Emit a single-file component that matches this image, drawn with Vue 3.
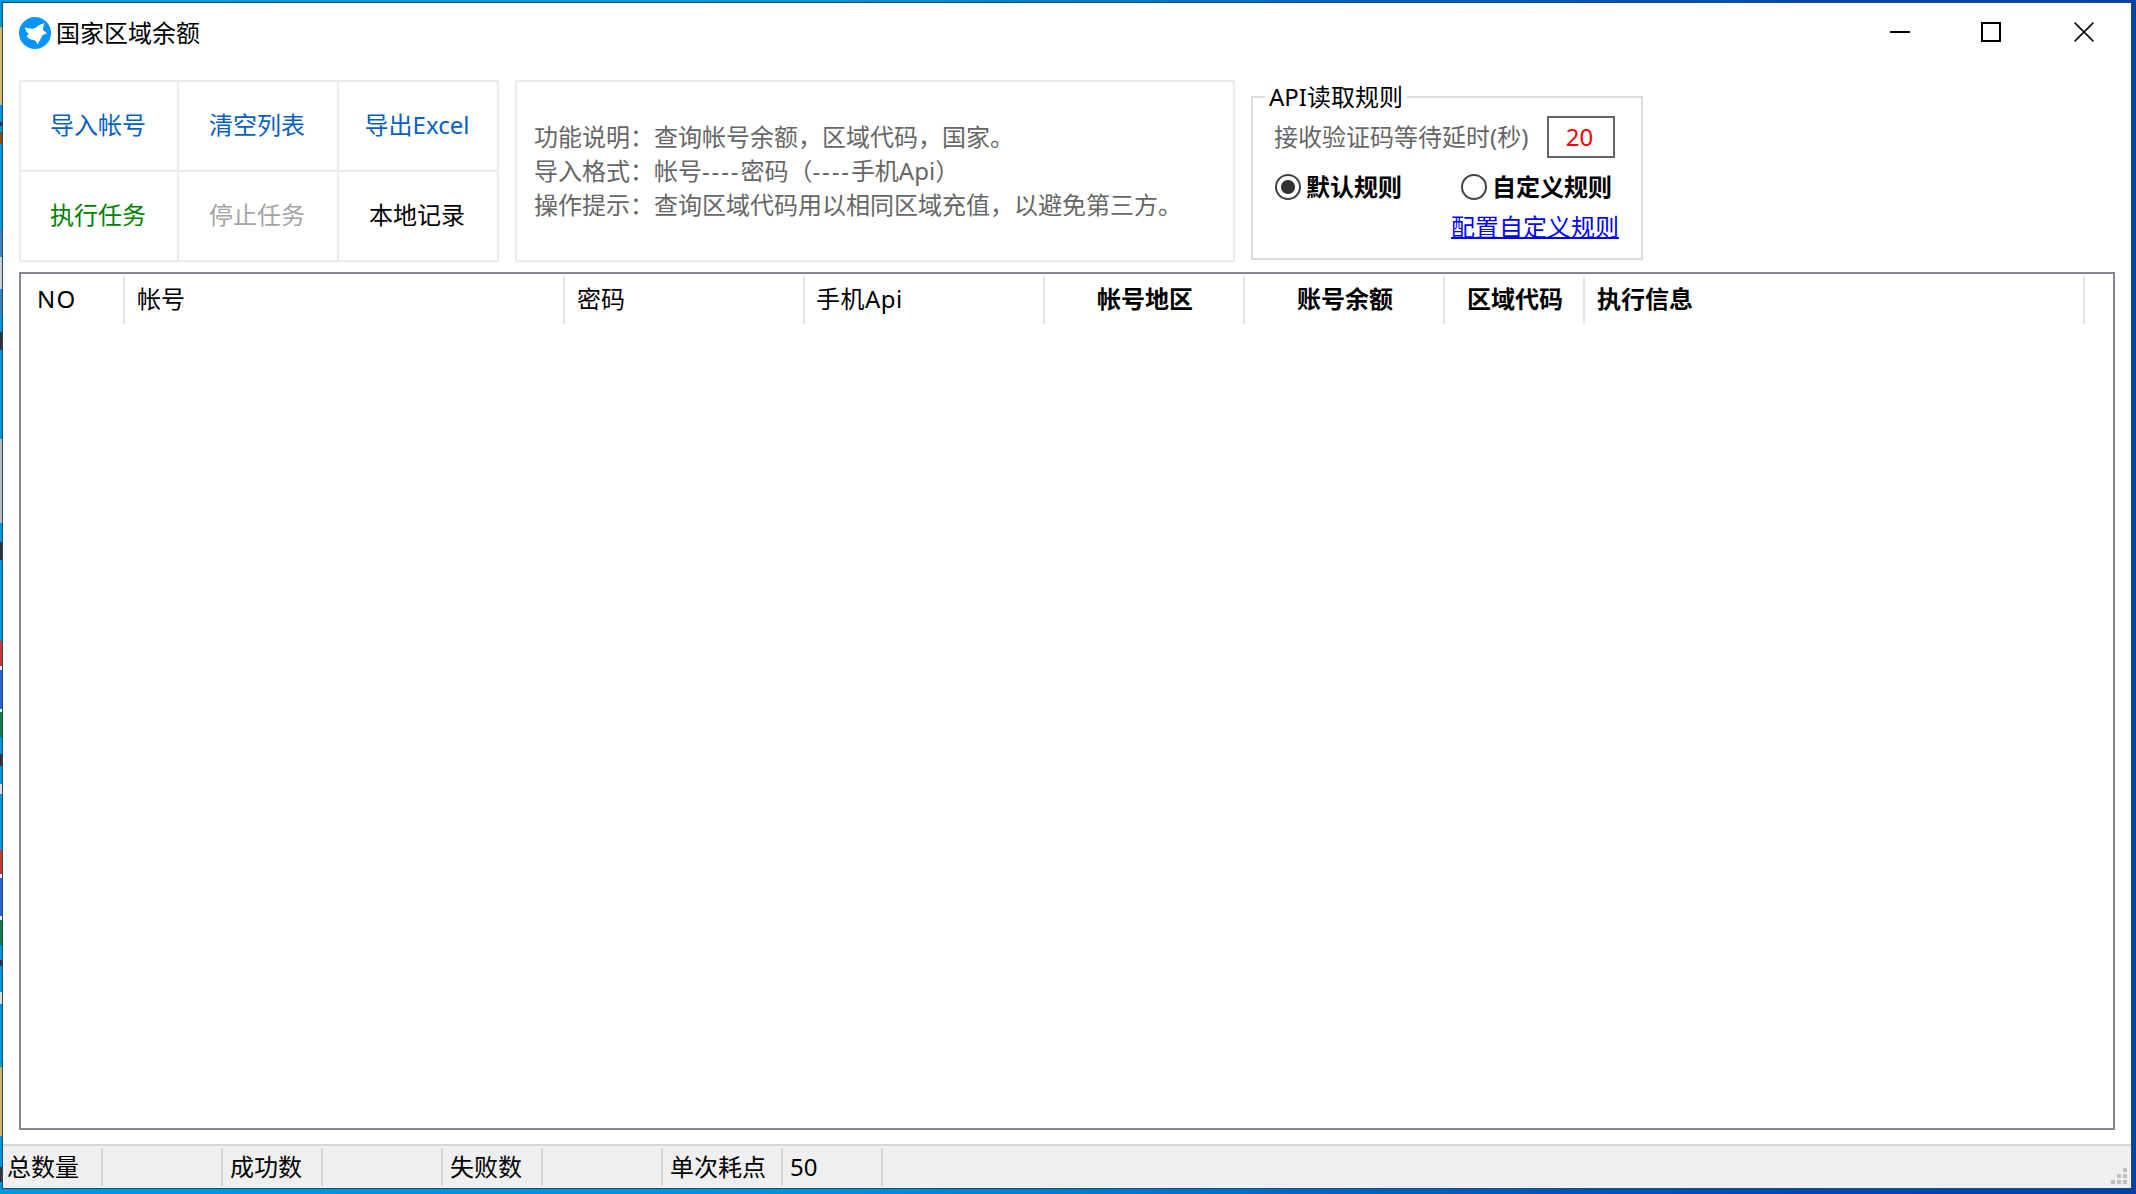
<script setup>
const commands = [
  { label: '导入帐号', tone: 'blue' },
  { label: '清空列表', tone: 'blue' },
  { label: '导出Excel', tone: 'blue' },
  { label: '执行任务', tone: 'green' },
  { label: '停止任务', tone: 'muted' },
  { label: '本地记录', tone: 'plain' },
]
const columns = [
  { label: 'NO', width: 104, kind: 'first' },
  { label: '帐号', width: 440, kind: '' },
  { label: '密码', width: 240, kind: '' },
  { label: '手机Api', width: 240, kind: 'phone' },
  { label: '帐号地区', width: 200, kind: 'bold center' },
  { label: '账号余额', width: 200, kind: 'bold center' },
  { label: '区域代码', width: 140, kind: 'bold center' },
  { label: '执行信息', width: 500, kind: 'bold' },
]
const cells = [
  { text: '总数量', width: 100 },
  { text: '', width: 120 },
  { text: '成功数', width: 100 },
  { text: '', width: 120 },
  { text: '失败数', width: 100 },
  { text: '', width: 120 },
  { text: '单次耗点', width: 120 },
  { text: '50', width: 100 },
]
</script>

<template>
  <div class="desktop">
    <div class="edge"></div>
    <main class="window">
      <header class="titlebar">
        <svg class="logo" width="32" height="32" viewBox="0 0 32 32">
          <circle cx="16" cy="16" r="16" fill="#0895fb" />
          <path d="M6 10.500 Q10 12 15.500 11.500 Q19.500 7.500 25.500 6 Q23.800 9 24 13 L28 16.200 L23.700 18 Q21.500 22.500 18.300 27.500 Q17.500 23.800 14.500 23 Q9.500 22.500 7.500 18.800 Q9 18.500 9.800 17.500 Q6.500 14.500 6 10.500Z" fill="#fff" />
        </svg>
        <h1>国家区域余额</h1>
        <div class="controls">
          <svg width="20" height="20" viewBox="0 0 20 20"><path d="M0 10H20" stroke="#000" stroke-width="2" /></svg>
          <svg width="20" height="20" viewBox="0 0 20 20"><path d="M1 1H19V19H1Z" fill="none" stroke="#000" stroke-width="2" /></svg>
          <svg width="20" height="20" viewBox="0 0 20 20"><path d="M.6 .6L19.400 19.400M19.400 .6L.6 19.400" stroke="#111" stroke-width="1.700" /></svg>
        </div>
      </header>

      <section class="toolbar">
        <div class="commands">
          <button v-for="c in commands" :key="c.label" :class="c.tone">{{ c.label }}</button>
        </div>
        <div class="notes">
          <p>功能说明：查询帐号余额，区域代码，国家。</p>
          <p>导入格式：帐号<span class="dash">----</span>密码（<span class="dash">----</span>手机Api）</p>
          <p>操作提示：查询区域代码用以相同区域充值，以避免第三方。</p>
        </div>
        <fieldset class="rules">
          <legend>API读取规则</legend>
          <div class="delay">
            <span>接收验证码等待延时(秒)</span>
            <div class="field">20</div>
          </div>
          <div class="choices">
            <label><i class="radio on"></i>默认规则</label>
            <label><i class="radio"></i>自定义规则</label>
          </div>
          <a class="link">配置自定义规则</a>
        </fieldset>
      </section>

      <section class="list">
        <div class="head">
          <div v-for="c in columns" :key="c.label" class="col" :class="c.kind" :style="{ width: c.width + 'px' }">{{ c.label }}</div>
        </div>
      </section>

      <footer class="status">
        <div v-for="(c, i) in cells" :key="i" class="cell" :style="{ width: c.width + 'px' }">{{ c.text }}</div>
        <svg class="grip" width="16" height="16" viewBox="0 0 16 16" fill="#bfbfbf">
          <path d="M12 0h4v4h-4zM6 6h4v4h-4zM12 6h4v4h-4zM0 12h4v4h-4zM6 12h4v4h-4zM12 12h4v4h-4z" />
        </svg>
      </footer>
    </main>
  </div>
</template>

<style>
body { margin: 0; overflow: hidden; }
</style>

<style scoped>
* { box-sizing: border-box; }
.desktop {
  width: 2136px;
  height: 1194px;
  display: flex;
  padding: 2px 4px 5px 0;
  background: linear-gradient(90deg, #0098dc 0, #0092d8 38%, #007acc 52%, #0060be 65%, #0047b0 85%, #0042a8 100%);
  font: 24px/34px "Noto Sans", "Noto Sans CJK SC", sans-serif;
  color: #000;
}
.edge {
  width: 2px;
  background: linear-gradient(#0094da 0 25px, #d8b96a 25px 103px, #0094da 103px 120px, #333 120px 124px, #0094da 124px 130px, #8a4a18 130px 142px, #0094da 142px 228px, #4a7fc0 228px 255px, #ccc 255px 287px, #3f7fbc 287px 313px, #0094da 313px 330px, #333 330px 348px, #0094da 348px 437px, #bbb 437px 521px, #0094da 521px 540px, #333 540px 558px, #0094da 558px 639px, #c83a30 639px 664px, #eee 664px 668px, #2d62d0 668px 707px, #eee 707px 710px, #147a3c 710px 735px, #0094da 735px 752px, #333 752px 764px, #0094da 764px 782px, #ddd 782px 792px, #0094da 792px 848px, #c83a30 848px 872px, #eee 872px 876px, #2d62d0 876px 914px, #eee 914px 918px, #147a3c 918px 943px, #0094da 943px 958px, #333 958px 964px, #0094da 964px 990px, #ddd 990px 1002px, #0094da 1002px 1065px, #d8b26a 1065px 1134px, #0094da 1134px 1165px, #333 1165px 1180px, #0094da 1180px);
}
.window {
  width: 2130px;
  height: 1187px;
  display: flex;
  flex-direction: column;
  background: #fff;
  border: 1px solid #1d4f70;
}
.titlebar { height: 61px; display: flex; padding: 14px 37px 0 16px; }
.logo { display: block; }
h1 { margin: -1px 0 0 5px; font: inherit; }
.controls { display: flex; gap: 72px; margin: 5px 0 0 auto; }
.controls svg:nth-child(2) { margin-left: -1px; }
.controls svg:nth-child(3) { margin-left: 1px; }
.toolbar { display: flex; align-items: flex-start; margin: 16px 0 0 16px; height: 182px; }
.commands {
  width: 480px;
  height: 182px;
  display: grid;
  grid-template-columns: 156px 158px 158px;
  grid-template-rows: 88px 88px;
  gap: 2px;
  padding: 2px;
  background: #ebebeb;
}
button { border: 0; padding: 0 2px 3px 0; background: #fff; font: inherit; }
.blue { color: #0560c4; }
.green { color: #008000; }
.muted { color: #a5a5a5; }
.plain { color: #000; }
.notes {
  width: 720px;
  height: 182px;
  margin-left: 16px;
  padding: 38px 0 0 17px;
  border: 2px solid #ebebeb;
  color: #666;
}
.notes p { margin: 0; white-space: nowrap; }
.dash { letter-spacing: 1.88px; }
.rules {
  width: 392px;
  height: 180px;
  min-width: 0;
  margin: 0 0 0 16px;
  padding: 2px 22px 0 21px;
  border: 2px solid #dcdcdc;
}
legend { margin-left: -9px; padding: 0 4px; }
.delay { display: flex; align-items: center; justify-content: space-between; height: 42px; color: #666; white-space: nowrap; }
.field { width: 68px; height: 42px; margin-right: 4px; padding-right: 3px; border: 2px solid #666; color: #f00; text-align: center; line-height: 38px; }
.choices { display: flex; height: 34px; margin: 12px 0 6px 1px; gap: 59px; font-weight: 700; white-space: nowrap; }
.choices label { display: flex; align-items: center; gap: 5px; }
.radio { width: 26px; height: 26px; border: 2px solid #444; border-radius: 50%; }
.radio.on { background: radial-gradient(circle, #333 0 6.500px, #fff 7.500px); }
.link { display: block; width: 168px; margin-left: 177px; color: #00f; text-decoration: underline; text-decoration-thickness: 2px; white-space: nowrap; }
.list { width: 2096px; height: 858px; margin: 10px 0 0 16px; border: 2px solid #828790; }
.head { display: flex; padding-top: 2px; }
.col { height: 48px; border-right: 2px solid #e5e5e5; padding-left: 12px; line-height: 46px; }
.col.first { padding-left: 16px; letter-spacing: 1.2px; }
.col.phone { padding-left: 11px; letter-spacing: .5px; }
.col.center { padding-left: 2px; text-align: center; }
.bold { font-weight: 700; }
.status { display: flex; height: 44px; margin-top: 14px; padding-top: 2px; border-top: 2px solid #d7d7d7; background: #efefef; }
.cell { height: 38px; border-right: 2px solid #d7d7d7; padding-left: 7px; line-height: 37px; white-space: nowrap; }
.cell:first-child { padding-left: 4px; }
.grip { margin: 20px 4px 0 auto; }
</style>
